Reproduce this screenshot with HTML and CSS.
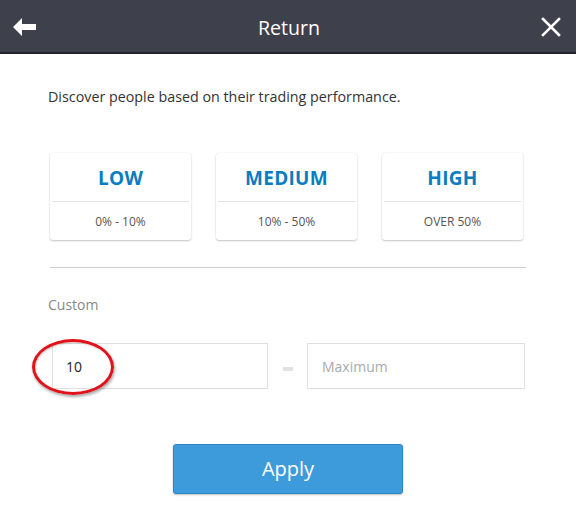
FILE: index.html
```html
<!DOCTYPE html>
<html>
<head>
<meta charset="utf-8">
<link rel="stylesheet" href="styles.css">
</head>
<body>
<div class="header">
  <svg class="back" width="24" height="18" viewBox="0 0 24 18"><path d="M0 9 L9 0 L9 6 L23 6 L23 12 L9 12 L9 18 Z" fill="#fff"/></svg>
  <div class="title">Return</div>
  <svg class="close" width="20" height="20" viewBox="0 0 20 20"><path d="M2 2 L18 18 M18 2 L2 18" stroke="#fff" stroke-width="2.6" stroke-linecap="square"/></svg>
</div>
<div class="content">
  <p class="desc">Discover people based on their trading performance.</p>
  <div class="cards">
    <div class="card"><div class="card-top">LOW</div><div class="card-bot">0% - 10%</div></div>
    <div class="card"><div class="card-top">MEDIUM</div><div class="card-bot">10% - 50%</div></div>
    <div class="card"><div class="card-top">HIGH</div><div class="card-bot">OVER 50%</div></div>
  </div>
  <div class="divider"></div>
  <div class="label">Custom</div>
  <div class="range">
    <div class="field-wrap">
      <div class="field value">10</div>
      <div class="ring"></div>
    </div>
    <div class="dash"></div>
    <div class="field placeholder">Maximum</div>
  </div>
  <div class="actions">
    <button class="apply">Apply</button>
  </div>
</div>
</body>
</html>
```
FILE: styles.css
```css
html, body { margin: 0; padding: 0; background: #fff; }
body { font-family: "Open Sans", "Liberation Sans", sans-serif; width: 576px; height: 518px; overflow: hidden; }
.header {
  height: 52px;
  background: #3e404c;
  border-bottom: 2px solid #23242b;
  display: flex;
  align-items: center;
  justify-content: space-between;
  padding: 0 15px 0 13px;
}
.back { display: block; margin-top: 2px; }
.close { display: block; margin-top: 1px; }
.title { color: #fff; font-size: 19.6px; position: relative; top: 1px; }
.content { padding: 0 0 0 48px; }
.desc { margin: 33px 0 0; font-size: 14.3px; color: #333; line-height: 20px; }
.cards { display: flex; gap: 25px; margin: 46px 0 0 2px; }
.card {
  width: 141px;
  height: 87px;
  border-radius: 3px;
  background: #fff;
  box-shadow: 0 1px 2px rgba(0,0,0,0.22), 0 0 1px rgba(0,0,0,0.12);
  display: flex;
  flex-direction: column;
}
.card-top {
  height: 49px;
  border-bottom: 1px solid #e2e2e2;
  margin: 0 2px;
  display: flex; align-items: center; justify-content: center;
  color: #0a7dc0; font-weight: 700; font-size: 19px; letter-spacing: 0.3px;
  padding-top: 2px; box-sizing: border-box;
}
.card-bot { flex: 1; display: flex; align-items: center; justify-content: center; font-size: 12px; color: #555; }
.divider { width: 476px; height: 1px; background: #cfcfcf; margin: 27px 0 0 2px; }
.label { margin-top: 27px; font-size: 14px; color: #888; line-height: 20px; }
.range { display: flex; align-items: center; margin: 28px 0 0 4px; }
.field-wrap { position: relative; }
.field {
  width: 216px; height: 46px; box-sizing: border-box;
  border: 1px solid #e0e0e0;
  display: flex; align-items: center; padding-left: 13px;
  font-size: 14px;
}
.value { color: #222; }
.placeholder { color: #aaa; padding-left: 14px; width: 218px; }
.dash { width: 10px; height: 4px; background: #e2e2e2; margin: 6px 14px 0 15px; }
.ring {
  position: absolute;
  left: -20px; top: -4px;
  width: 82px; height: 56px;
  border: 3px solid #e0121a;
  border-radius: 50%;
  box-sizing: border-box;
  box-shadow: 1px 2px 3px rgba(0,0,0,0.35), inset 1px 1px 2px rgba(0,0,0,0.2);
}
.actions { display: flex; margin: 55px 0 0 125px; }
.apply {
  width: 230px; height: 50px;
  background: #3e9bdb;
  border: 1px solid #2f86c4;
  border-radius: 3px;
  color: #fff;
  font-family: "Open Sans", "Liberation Sans", sans-serif;
  font-size: 20px;
  box-shadow: 0 1px 2px rgba(0,0,0,0.25);
  padding: 0 0 2px;
}
```
